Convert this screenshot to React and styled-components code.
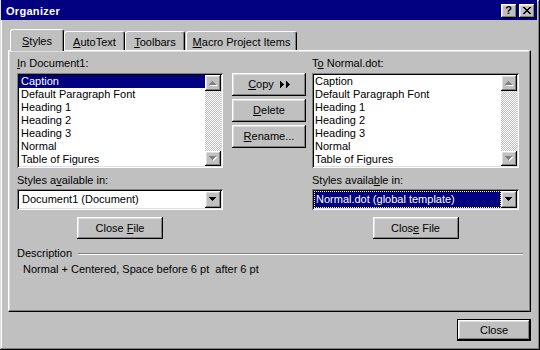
import React from "react";
import styled, { createGlobalStyle } from "styled-components";

const GlobalStyle = createGlobalStyle`
  html, body {
    margin: 0;
    padding: 0;
    background: #c0c0c0;
  }
  body {
    font-family: "Liberation Sans", Arial, sans-serif;
    font-size: 11px;
    color: #000;
  }
`;

// classic 3D bevels
const raised = `box-shadow: inset -1px -1px #000, inset 1px 1px #fff, inset -2px -2px #808080, inset 2px 2px #dfdfdf;`;
const sunken = `box-shadow: inset 1px 1px #808080, inset -1px -1px #fff, inset 2px 2px #000, inset -2px -2px #dfdfdf;`;

const Window = styled.div`
  width: 540px;
  height: 350px;
  box-sizing: border-box;
  background: #c0c0c0;
  padding: 0 3px 2px 1px;
  box-shadow: inset -1px -1px #000, inset 1px 1px #dfdfdf, inset -2px -2px #808080,
    inset 2px 2px #fff;
  display: flex;
  flex-direction: column;
`;

const TitleBar = styled.div`
  height: 20px;
  box-sizing: border-box;
  padding: 2px 2px 0 5px;
  background: #000080;
  display: flex;
  align-items: center;
`;

const Title = styled.div`
  flex: 1;
  color: #fff;
  font-weight: bold;
  font-size: 11px;
  letter-spacing: 0.3px;
`;

const TitleButton = styled.div`
  width: 16px;
  height: 14px;
  box-sizing: border-box;
  background: #c0c0c0;
  ${raised}
  margin-left: ${(p) => (p.$gap ? 2 : 0)}px;
  display: flex;
  align-items: center;
  justify-content: center;
  font-weight: bold;
  font-size: 11px;
  line-height: 1;
  padding: 0 1px 1px 0;
`;

const Body = styled.div`
  flex: 1;
  padding: 0 6px 0 7px;
  display: flex;
  flex-direction: column;
`;

const TabRow = styled.div`
  display: flex;
  align-items: flex-end;
  height: 21px;
  margin-top: 9px;
  padding-left: 2px;
`;

const Tab = styled.div`
  position: relative;
  z-index: ${(p) => (p.$active ? 1 : 0)};
  box-sizing: border-box;
  width: ${(p) => p.$w}px;
  height: ${(p) => (p.$active ? 22 : 19)}px;
  margin-bottom: ${(p) => (p.$active ? -1 : 0)}px;
  margin-left: ${(p) => p.$ml || 0}px;
  padding-top: 1px;
  background: #c0c0c0;
  border-top: 1px solid #fff;
  border-left: 1px solid #fff;
  border-right: 1px solid #000;
  border-radius: 3px 3px 0 0;
  box-shadow: inset -1px 0 #808080;
  display: flex;
  align-items: center;
  justify-content: center;
  white-space: nowrap;
`;

const Panel = styled.div`
  height: 262px;
  box-sizing: border-box;
  border-top: 1px solid #fff;
  border-left: 1px solid #fff;
  border-right: 1px solid #000;
  border-bottom: 1px solid #000;
  box-shadow: inset -1px -1px #808080, inset 1px 1px #dfdfdf;
  padding: 6px 10px 0 8px;
`;

const Columns = styled.div`
  display: flex;
  align-items: flex-start;
`;

const Column = styled.div`
  width: ${(p) => p.$w}px;
  display: flex;
  flex-direction: column;
`;

const Label = styled.div`
  height: 13px;
  line-height: 13px;
  white-space: nowrap;
  margin-top: ${(p) => p.$mt || 0}px;
`;

const Key = styled.span`
  text-decoration: underline;
`;

const ListBox = styled.div`
  margin-top: 3px;
  height: 95px;
  box-sizing: border-box;
  padding: 2px;
  background: #fff;
  ${sunken}
  display: flex;
`;

const Items = styled.div`
  flex: 1;
  overflow: hidden;
`;

const Item = styled.div`
  height: 13px;
  line-height: 13px;
  padding-left: ${(p) => p.$pl}px;
  white-space: nowrap;
  background: ${(p) => (p.$selected ? "#000080" : "transparent")};
  color: ${(p) => (p.$selected ? "#fff" : "#000")};
`;

const ScrollBar = styled.div`
  width: 16px;
  display: flex;
  flex-direction: column;
`;

const Track = styled.div`
  flex: 1;
  background: repeating-conic-gradient(#c0c0c0 0% 25%, #fff 0% 50%) 0 0 / 2px 2px;
`;

const ArrowButton = styled.div`
  width: 16px;
  height: ${(p) => p.$h || 16}px;
  box-sizing: border-box;
  background: #c0c0c0;
  ${raised}
  display: flex;
  align-items: center;
  justify-content: center;
  flex-shrink: 0;
`;

const Combo = styled.div`
  margin-top: 2px;
  height: 21px;
  box-sizing: border-box;
  padding: 2px;
  background: #fff;
  ${sunken}
  display: flex;
`;

const ComboText = styled.div`
  flex: 1;
  box-sizing: border-box;
  line-height: 15px;
  padding-left: ${(p) => (p.$selected ? 1 : 2)}px;
  white-space: nowrap;
  background: ${(p) => (p.$selected ? "#000080" : "#fff")};
  color: ${(p) => (p.$selected ? "#fff" : "#000")};
  border: 1px ${(p) => (p.$selected ? "dotted #ffff9c" : "solid transparent")};
`;

const Button = styled.div`
  width: ${(p) => p.$w || 74}px;
  height: ${(p) => p.$h || 23}px;
  box-sizing: border-box;
  background: #c0c0c0;
  ${raised}
  display: flex;
  align-items: center;
  justify-content: center;
  gap: 6px;
  white-space: nowrap;
  margin-top: ${(p) => p.$mt || 0}px;
  align-self: ${(p) => (p.$center ? "center" : "auto")};
  padding-bottom: 1px;
`;

const ButtonColumn = styled.div`
  width: 74px;
  margin: 16px 6px 0 9px;
  display: flex;
  flex-direction: column;
  gap: 3px;
`;

const GroupHeader = styled.div`
  margin-top: 8px;
  display: flex;
  align-items: center;
  height: 13px;
  line-height: 13px;
`;

const Etched = styled.div`
  flex: 1;
  margin: 1px -3px 0 6px;
  border-top: 1px solid #808080;
  border-bottom: 1px solid #fff;
`;

const Description = styled.div`
  margin: 3px 0 0 6px;
  line-height: 13px;
  white-space: pre;
`;

const Footer = styled.div`
  margin-top: 7px;
  display: flex;
  justify-content: flex-end;
`;

const DefaultButton = styled.div`
  width: 74px;
  height: 22px;
  box-sizing: border-box;
  border: 1px solid #000;
  background: #c0c0c0;
  ${raised}
  display: flex;
  align-items: center;
  justify-content: center;
  padding-bottom: 1px;
`;

// pixel triangle drawn row by row
function Triangle({ dir = "down", color = "#000", shadow }) {
  const rows = [7, 5, 3, 1];
  const rects = [];
  rows.forEach((w, i) => {
    const off = (7 - w) / 2;
    if (dir === "down") rects.push([off, i, w, 1]);
    if (dir === "up") rects.push([off, 3 - i, w, 1]);
  });
  return (
    <svg width={8} height={5} shapeRendering="crispEdges">
      {shadow &&
        rects.map(([x, y, rw, rh], i) => (
          <rect key={"s" + i} x={x + 1} y={y + 1} width={rw} height={rh} fill={shadow} />
        ))}
      {rects.map(([x, y, rw, rh], i) => (
        <rect key={i} x={x} y={y} width={rw} height={rh} fill={color} />
      ))}
    </svg>
  );
}

function CloseGlyph() {
  const pattern = [
    "XX....XX",
    ".XX..XX.",
    "..XXXX..",
    "...XX...",
    "..XXXX..",
    ".XX..XX.",
    "XX....XX",
  ];
  return (
    <svg width="8" height="7" shapeRendering="crispEdges">
      {pattern.flatMap((row, y) =>
        row.split("").map((c, x) =>
          c === "X" ? <rect key={x + "-" + y} x={x} y={y} width="1" height="1" fill="#000" /> : null
        )
      )}
    </svg>
  );
}

function CopyArrows() {
  return (
    <svg width="10" height="7" shapeRendering="crispEdges">
      {[0, 6].map((ox) =>
        [7, 5, 3, 1].map((h, i) => (
          <rect key={ox + "-" + i} x={ox + i} y={(7 - h) / 2} width="1" height={h} fill="#000" />
        ))
      )}
    </svg>
  );
}

const styles = [
  "Caption",
  "Default Paragraph Font",
  "Heading 1",
  "Heading 2",
  "Heading 3",
  "Normal",
  "Table of Figures",
];

function StyleList({ selected, pl }) {
  return (
    <ListBox>
      <Items>
        {styles.map((s) => (
          <Item key={s} $selected={s === selected} $pl={pl}>
            {s}
          </Item>
        ))}
      </Items>
      <ScrollBar>
        <ArrowButton>
          <Triangle dir="up" color="#808080" shadow="#fff" />
        </ArrowButton>
        <Track />
        <ArrowButton $h={15}>
          <Triangle dir="down" color="#808080" shadow="#fff" />
        </ArrowButton>
      </ScrollBar>
    </ListBox>
  );
}

function ComboBox({ text, selected }) {
  return (
    <Combo>
      <ComboText $selected={selected}>{text}</ComboText>
      <ArrowButton $h={17}>
        <Triangle dir="down" />
      </ArrowButton>
    </Combo>
  );
}

export default function App() {
  return (
    <>
      <GlobalStyle />
      <Window>
        <TitleBar>
          <Title>Organizer</Title>
          <TitleButton>?</TitleButton>
          <TitleButton $gap>
            <CloseGlyph />
          </TitleButton>
        </TitleBar>

        <Body>
          <TabRow>
            <Tab $active $w={54}>
              <span><Key>S</Key>tyles</span>
            </Tab>
            <Tab $w={61}>
              <span><Key>A</Key>utoText</span>
            </Tab>
            <Tab $w={60}>
              <span><Key>T</Key>oolbars</span>
            </Tab>
            <Tab $w={111} $ml={1}>
              <span><Key>M</Key>acro Project Items</span>
            </Tab>
          </TabRow>

          <Panel>
            <Columns>
              <Column $w={206}>
                <Label>
                  <Key>I</Key>n Document1:
                </Label>
                <StyleList selected="Caption" pl={2} />
                <Label $mt={6}>
                  Styles a<Key>v</Key>ailable in:
                </Label>
                <ComboBox text="Document1 (Document)" />
                <Button $w={86} $h={22} $mt={7} $center>
                  <span>
                    Close <Key>F</Key>ile
                  </span>
                </Button>
              </Column>

              <ButtonColumn>
                <Button>
                  <span>
                    <Key>C</Key>opy
                  </span>
                  <CopyArrows />
                </Button>
                <Button>
                  <span>
                    <Key>D</Key>elete
                  </span>
                </Button>
                <Button>
                  <span>
                    <Key>R</Key>ename...
                  </span>
                </Button>
              </ButtonColumn>

              <Column $w={207}>
                <Label>
                  T<Key>o</Key> Normal.dot:
                </Label>
                <StyleList pl={1} />
                <Label $mt={6}>
                  Styles availa<Key>b</Key>le in:
                </Label>
                <ComboBox text="Normal.dot (global template)" selected />
                <Button $w={86} $h={22} $mt={7} $center>
                  <span>
                    Clos<Key>e</Key> File
                  </span>
                </Button>
              </Column>
            </Columns>

            <GroupHeader>
              Description
              <Etched />
            </GroupHeader>
            <Description>Normal + Centered, Space before 6 pt  after 6 pt</Description>
          </Panel>

          <Footer>
            <DefaultButton>Close</DefaultButton>
          </Footer>
        </Body>
      </Window>
    </>
  );
}
